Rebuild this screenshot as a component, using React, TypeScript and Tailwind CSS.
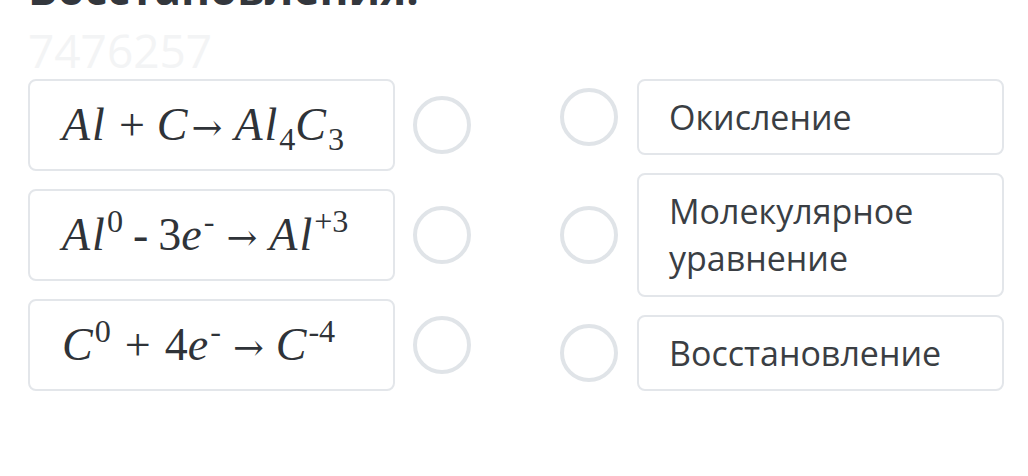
import type { ReactNode } from "react";

function V({ children }: { children: ReactNode }) {
  return <span className="italic tracking-[2px]">{children}</span>;
}

function Sup({ children }: { children: ReactNode }) {
  return <span className="relative top-[-0.55em] text-[0.7em] not-italic">{children}</span>;
}

function Sub({ children }: { children: ReactNode }) {
  return <span className="relative top-[0.3em] text-[0.7em] not-italic">{children}</span>;
}

function Arrow({ className = "" }: { className?: string }) {
  return <span className={`font-['DejaVu_Serif',serif] text-[0.8em] ${className}`}>→</span>;
}

function Circle() {
  return <div className="h-[58px] w-[58px] shrink-0 rounded-full border-[4px] border-[#e0e4e8] bg-white" />;
}

const leftItems: ReactNode[] = [
  <>
    <V>Al</V>
    <span className="mx-[12px]">+</span>
    <V>C</V>
    <Arrow className="ml-[2px] mr-[12px]" />
    <V>Al</V>
    <Sub>4</Sub>
    <V>C</V>
    <Sub>3</Sub>
  </>,
  <>
    <V>Al</V>
    <Sup>0</Sup>
    <span className="mx-[10px]">-</span>
    <span>3</span>
    <V>e</V>
    <Sup>-</Sup>
    <Arrow className="mx-[12px]" />
    <V>Al</V>
    <Sup>+3</Sup>
  </>,
  <>
    <V>C</V>
    <Sup>0</Sup>
    <span className="mx-[14px]">+</span>
    <span>4</span>
    <V>e</V>
    <Sup>-</Sup>
    <Arrow className="mx-[12px]" />
    <V>C</V>
    <Sup>-4</Sup>
  </>,
];

const rightItems = [
  { text: "Окисление", h: "h-[76px]" },
  { text: "Молекулярное уравнение", h: "h-[124px]" },
  { text: "Восстановление", h: "h-[76px]" },
];

export default function App() {
  return (
    <div className="h-[476px] w-[1028px] overflow-hidden bg-white font-['Open_Sans',sans-serif]">
      {/* cut-off heading */}
      <div className="flex h-[10px] items-end overflow-hidden pl-[28px]">
        <div className="whitespace-nowrap text-[44px] font-bold leading-[44px] text-[#33373d]">Восстановления:</div>
      </div>
      <div className="mt-[12px] pl-[28px] text-[46px] leading-[56px] text-[#f3f4f5]">7476257</div>

      <div className="mt-[1px] flex pl-[28px]">
        {/* left column */}
        <div className="flex flex-col gap-[18px]">
          {leftItems.map((item, i) => (
            <div key={i} className="flex items-center gap-[18px]">
              <div className="flex h-[92px] w-[367px] items-center rounded-[8px] border-2 border-[#e3e6ea] pl-[32px] font-['Liberation_Serif',serif] text-[46px] leading-none text-[#2f3338]">
                <span className="whitespace-nowrap">{item}</span>
              </div>
              <Circle />
            </div>
          ))}
        </div>

        {/* right column */}
        <div className="ml-[89px] flex flex-col gap-[18px]">
          {rightItems.map((item) => (
            <div key={item.text} className="flex items-center gap-[19px]">
              <Circle />
              <div
                className={`flex ${item.h} w-[367px] items-center rounded-[8px] border-2 border-[#e3e6ea] px-[30px] text-[34px] leading-[47px] text-[#3a3e43]`}
              >
                {item.text}
              </div>
            </div>
          ))}
        </div>
      </div>
    </div>
  );
}
